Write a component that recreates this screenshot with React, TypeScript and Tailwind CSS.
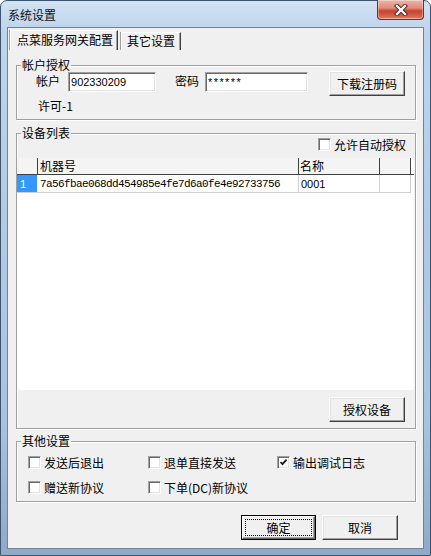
import React from "react";

const cjk = "font-['Noto_Sans_CJK_SC','Liberation_Sans',sans-serif]";

function Btn({ children, className = "", isDefault = false }: { children: React.ReactNode; className?: string; isDefault?: boolean }) {
  if (isDefault) {
    return (
      <div className={`border border-black bg-[#f0f0f0] flex ${className}`}>
        <div className="flex-1 flex items-center justify-center border border-t-white border-l-white border-b-[#696969] border-r-[#696969] shadow-[inset_-1px_-1px_0_#a0a0a0]">
          <div className="flex-1 mx-[2px] h-[17px] border border-dotted border-black flex items-center justify-center leading-[12px]">
            {children}
          </div>
        </div>
      </div>
    );
  }
  return (
    <div
      className={`flex items-center justify-center bg-[#f0f0f0] border border-t-white border-l-white border-b-[#404040] border-r-[#404040] shadow-[inset_-1px_-1px_0_#a0a0a0,inset_1px_1px_0_#e3e3e3] leading-[12px] ${className}`}
    >
      {children}
    </div>
  );
}

function Check({ checked = false }: { checked?: boolean }) {
  return (
    <span className="w-[13px] h-[13px] shrink-0 bg-white border border-t-[#a0a0a0] border-l-[#a0a0a0] border-b-white border-r-white shadow-[inset_1px_1px_0_#696969,inset_-1px_-1px_0_#e3e3e3] flex items-center justify-center">
      {checked && (
        <svg width="9" height="9" viewBox="0 0 9 9">
          <path d="M1.5 4 L3.5 6.2 L7.6 1.6" stroke="#1a1a1a" strokeWidth="1.8" fill="none" />
        </svg>
      )}
    </span>
  );
}

function Group({ label, className = "", children }: { label: string; className?: string; children?: React.ReactNode }) {
  return (
    <div className={`relative ml-[8px] w-[400px] border border-[#a0a0a0] shadow-[inset_1px_1px_0_#fff,1px_1px_0_#fff] flex flex-col ${className}`}>
      <span className="absolute left-[4px] top-[-7px] bg-[#f0f0f0] px-[1px] leading-[12px]">{label}</span>
      {children}
    </div>
  );
}

function Input({ value, className = "", valueClass = "" }: { value: string; className?: string; valueClass?: string }) {
  return (
    <div
      className={`h-[20px] bg-white border border-t-[#a0a0a0] border-l-[#a0a0a0] border-b-white border-r-white shadow-[inset_1px_1px_0_#696969,inset_-1px_-1px_0_#e3e3e3] flex items-center pl-[2px] font-['Liberation_Sans',sans-serif] text-[11px] ${className}`}
    >
      <span className={valueClass}>{value}</span>
    </div>
  );
}

function CheckItem({ label, checked = false, className = "" }: { label: string; checked?: boolean; className?: string }) {
  return (
    <div className={`flex items-center gap-[3px] h-[13px] ${className}`}>
      <Check checked={checked} />
      <span className="leading-[12px] whitespace-nowrap">{label}</span>
    </div>
  );
}

export default function App() {
  return (
    <div className={`w-[431px] h-[556px] ${cjk} text-[12px] leading-[12px] text-black`}>
      <div className="w-[431px] h-[556px] flex flex-col rounded-t-[7px] border border-[#3e5570] px-[6px] pb-[6px] bg-[linear-gradient(180deg,#d3e3f4_0px,#c0d5ec_26px,#b3cbe5_200px,#a9c2de_420px,#8fa9c6_556px)]">
        {/* title bar */}
        <div className="h-[26px] flex items-start justify-between shrink-0">
          <span className="ml-[1px] mt-[8px] leading-[12px] text-[#111]">系统设置</span>
          <div className="-mt-[1px] w-[47px] h-[20px] rounded-b-[4px] border border-t-0 border-[#7a2c22] bg-[linear-gradient(180deg,#ecb6aa_0%,#df8b7a_42%,#c8412e_58%,#d5634b_85%,#e2846c_100%)] shadow-[inset_0_0_0_1px_rgba(255,255,255,0.35)] flex items-center justify-center">
            <svg width="14" height="12" viewBox="0 0 14 12">
              <path d="M3 2 L11 10 M11 2 L3 10" stroke="#4a1f1a" strokeWidth="4.2" strokeLinecap="square" fill="none" />
              <path d="M3 2 L11 10 M11 2 L3 10" stroke="#ffffff" strokeWidth="2.4" strokeLinecap="square" fill="none" />
            </svg>
          </div>
        </div>

        {/* client */}
        <div className="h-[522px] border border-[#6f8299] bg-[#f0f0f0] flex flex-col">
          {/* tabs */}
          <div className="mt-[2px] h-[20px] ml-[2px] flex items-end shrink-0">
            <div className="h-[20px] w-[108px] pl-[6px] pt-[3px] bg-[#f0f0f0] border-l border-t border-r border-l-white border-t-white border-r-[#404040] shadow-[inset_-1px_0_0_#a0a0a0,-1px_0_0_#a0a0a0] leading-[12px]">
              点菜服务网关配置
            </div>
            <div className="ml-[3px] h-[18px] w-[60px] pl-[5px] pt-[2px] bg-[#f0f0f0] border-l border-t border-r border-l-white border-t-white border-r-[#404040] shadow-[inset_-1px_0_0_#a0a0a0,-1px_0_0_#a0a0a0] leading-[12px]">
              其它设置
            </div>
          </div>

          {/* group 1 */}
          <Group label="帐户授权" className="mt-[15px] h-[55px]">
            <div className="mt-[5px] h-[25px] flex items-start pl-[19px]">
              <span className="mt-[4px] leading-[12px]">帐户</span>
              <Input value="902330209" className="ml-[8px] mt-[1px] w-[88px]" />
              <span className="ml-[19px] mt-[4px] leading-[12px]">密码</span>
              <Input value="******" className="ml-[6px] mt-[1px] w-[103px]" valueClass="tracking-[1.4px]" />
              <Btn className="ml-[21px] w-[76px] h-[25px]">下载注册码</Btn>
            </div>
            <span className="mt-[4px] ml-[21px] leading-[12px]">许可-1</span>
          </Group>

          {/* group 2 */}
          <Group label="设备列表" className="mt-[13px] h-[296px]">
            <div className="mt-[4px] h-[13px] flex justify-end pr-[9px]">
              <CheckItem label="允许自动授权" />
            </div>
            <div className="mt-[7px] h-[232px] w-[397px] bg-white flex flex-col">
              {/* header */}
              <div className="h-[17px] flex border-b border-[#404040] bg-[#f4f4f4]">
                <div className="w-[21px] border-r border-[#404040]" />
                <div className="w-[261px] border-r border-[#404040] pl-[2px] pt-[2px] leading-[12px]">机器号</div>
                <div className="w-[81px] border-r border-[#404040] pl-[1px] pt-[2px] leading-[12px]">名称</div>
                <div className="w-[31px] border-r border-[#404040]" />
                <div className="flex-1 bg-white" />
              </div>
              {/* row */}
              <div className="h-[18px] flex">
                <div className="w-[20px] bg-[#3399ff] text-white font-['Liberation_Sans',sans-serif] text-[11px] pl-[3px] flex items-center border-b border-[#d0d0d0]">1</div>
                <div className="w-[262px] border-r border-b border-[#d0d0d0] pl-[3px] flex items-center font-['Liberation_Mono',monospace] text-[11px] tracking-[-0.6px] whitespace-nowrap">
                  7a56fbae068dd454985e4fe7d6a0fe4e92733756
                </div>
                <div className="w-[81px] border-r border-b border-[#d0d0d0] pl-[2px] flex items-center font-['Liberation_Sans',sans-serif] text-[11px]">
                  0001
                </div>
                <div className="w-[31px] border-r border-b border-[#d0d0d0]" />
              </div>
            </div>
            <div className="mt-[7px] flex justify-end pr-[10px]">
              <Btn className="w-[76px] h-[25px]">授权设备</Btn>
            </div>
          </Group>

          {/* group 3 */}
          <Group label="其他设置" className="mt-[12px] h-[61px]">
            <div className="mt-[14px] flex pl-[11px]">
              <CheckItem label="发送后退出" className="w-[120px]" />
              <CheckItem label="退单直接发送" className="w-[129px]" />
              <CheckItem label="输出调试日志" checked />
            </div>
            <div className="mt-[12px] flex pl-[11px]">
              <CheckItem label="赠送新协议" className="w-[120px]" />
              <CheckItem label="下单(DC)新协议" className="w-[129px]" />
            </div>
          </Group>

          {/* buttons */}
          <div className="mt-[13px] flex justify-end pr-[25px] gap-[6px]">
            <Btn isDefault className="w-[75px] h-[25px]">确定</Btn>
            <Btn className="w-[76px] h-[25px]">取消</Btn>
          </div>
        </div>
      </div>
    </div>
  );
}
